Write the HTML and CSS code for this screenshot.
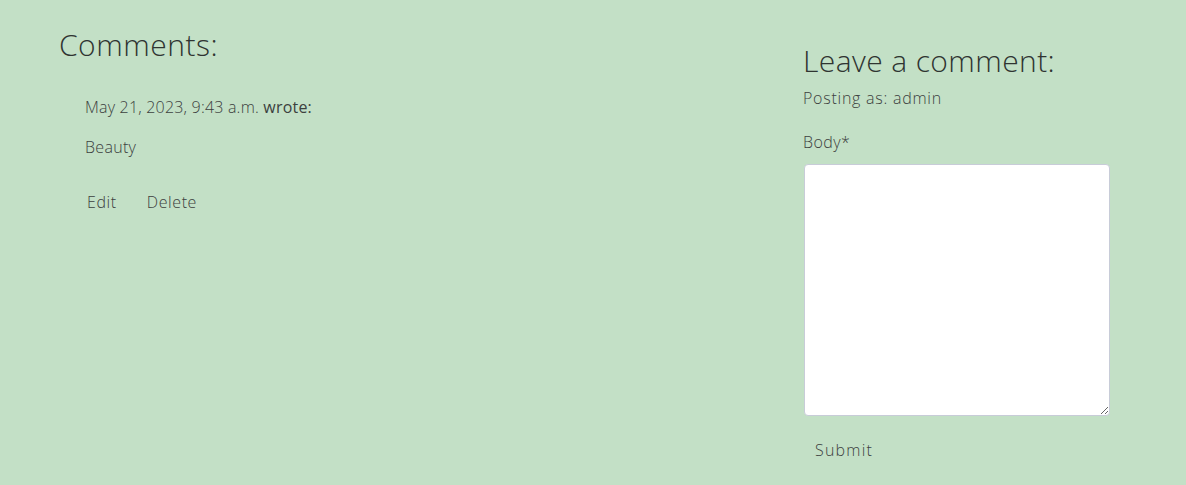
FILE: index.html
```html
<!DOCTYPE html>
<html lang="en">
<head>
<meta charset="utf-8">
<title>Comments</title>
<link rel="stylesheet" href="styles.css">
</head>
<body>
<div class="page">
  <section class="comments">
    <h3 class="title">Comments:</h3>
    <div class="comment">
      <p class="meta">May 21, 2023, 9:43 a.m. <span class="wrote">wrote:</span></p>
      <p class="body">Beauty</p>
      <div class="actions">
        <button class="btn">Edit</button>
        <button class="btn">Delete</button>
      </div>
    </div>
  </section>
  <section class="form">
    <h3 class="title title-form">Leave a comment:</h3>
    <p class="posting">Posting as: admin</p>
    <form>
      <label class="label" for="body">Body*</label>
      <textarea id="body" class="area"></textarea>
      <button type="button" class="btn submit">Submit</button>
    </form>
  </section>
</div>
</body>
</html>
```
FILE: styles.css
```css
html, body {
  margin: 0;
  padding: 0;
  background: #c3e0c6;
}
body {
  font-family: "Open Sans", "Lato", sans-serif;
  font-weight: 300;
  color: #3c413e;
}
.page {
  display: flex;
  padding: 0 0 0 59px;
}
.comments {
  width: 744px;
}
.form {
  width: 320px;
}
.title {
  margin: 0;
  font-weight: 300;
  font-size: 30px;
  letter-spacing: 0.5px;
  color: #2f3431;
}
.comments .title {
  padding-top: 24px;
  line-height: 42px;
}
.title-form {
  padding-top: 40px;
  line-height: 42px;
  letter-spacing: 0.4px;
}
.comment {
  padding-left: 26px;
}
.meta {
  margin: 29px 0 0;
  font-size: 16px;
  line-height: 24px;
  letter-spacing: 0.2px;
}
.wrote {
  font-weight: 500;
}
.body {
  margin: 16px 0 0;
  font-size: 16px;
  line-height: 24px;
  letter-spacing: 0.3px;
}
.actions {
  display: flex;
  gap: 2px;
  margin-top: 23px;
}
.btn {
  font-family: inherit;
  font-weight: 300;
  font-size: 16px;
  letter-spacing: 0.6px;
  color: #3c413e;
  background: none;
  border: 0;
  padding: 8px 12px 8px 2px;
  margin: 0 14px 0 0;
  line-height: 24px;
  cursor: pointer;
}
.posting {
  margin: 4px 0 0;
  font-size: 16px;
  line-height: 24px;
  letter-spacing: 0.75px;
}
form {
  display: flex;
  flex-direction: column;
  align-items: flex-start;
}
.label {
  margin-top: 20px;
  font-size: 16px;
  line-height: 24px;
  letter-spacing: 0.4px;
}
.area {
  margin: 10px 0 0 1px;
  width: 306px;
  height: 252px;
  box-sizing: border-box;
  background: #fff;
  border: 1px solid #c8ccd8;
  border-radius: 4px;
}
.submit {
  margin-top: 22px;
  padding: 0 12px;
  letter-spacing: 1.2px;
}
```
